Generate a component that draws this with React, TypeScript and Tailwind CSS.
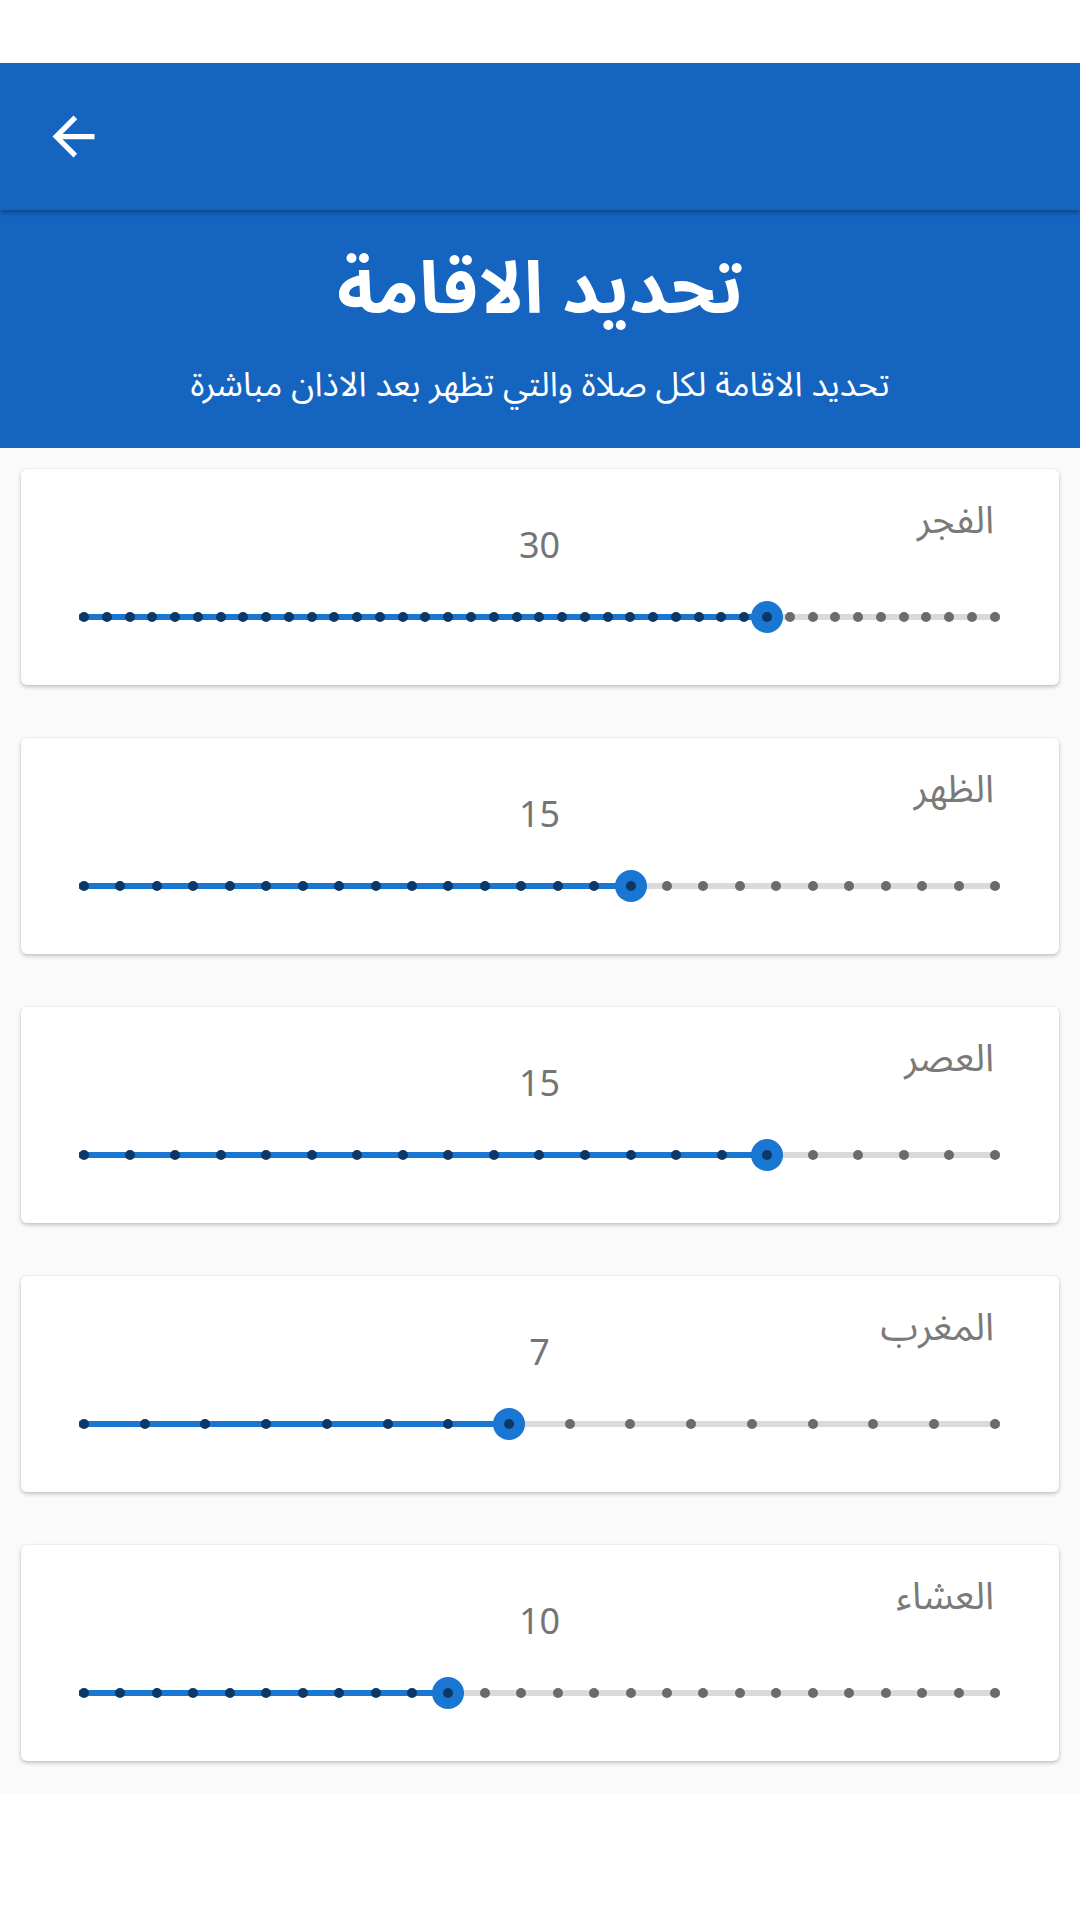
const arabic = { fontFamily: '"Noto Sans Arabic", "Noto Sans", "DejaVu Sans", sans-serif' };

type Prayer = { name: string; value: number; max: number };

const prayers: Prayer[] = [
  { name: "الفجر", value: 30, max: 40 },
  { name: "الظهر", value: 15, max: 25 },
  { name: "العصر", value: 15, max: 20 },
  { name: "المغرب", value: 7, max: 15 },
  { name: "العشاء", value: 10, max: 25 },
];

const BackArrow = () => (
  <svg viewBox="0 0 24 24" width={63} height={63} fill="white">
    <path d="M20 11H7.83l5.59-5.59L12 4l-8 8 8 8 1.41-1.41L7.83 13H20v-2z" />
  </svg>
);

const Slider = ({ value, max }: { value: number; max: number }) => {
  const pct = (value / max) * 100;
  const dots = Array.from({ length: max + 1 }, (_, i) => i);
  return (
    <div className="relative h-[32px] w-full flex items-center" dir="ltr">
      <div className="absolute left-0 right-0 h-[6px] bg-[#dadada]" />
      <div className="absolute left-0 right-0 px-[5px] flex items-center">
        <div className="relative w-full h-[6px]">
          <div className="absolute left-[-5px] top-0 h-[6px] bg-[#1976d2]" style={{ width: `calc(${pct}% + 5px)` }} />
        </div>
      </div>
      <div className="absolute left-0 right-0 flex justify-between items-center">
        {dots.map((i) => (
          <span key={i} className={`block w-[10px] h-[10px] rounded-full ${i <= value ? "bg-[#0d3766]" : "bg-[#6b6b6b]"}`} />
        ))}
      </div>
      <div className="absolute left-[5px] right-[5px] top-0 h-[32px]">
        <div
          className="absolute top-0 w-[32px] h-[32px] -ml-[16px] rounded-full bg-[#1976d2] flex items-center justify-center"
          style={{ left: `${pct}%` }}
        >
          <span className="block w-[10px] h-[10px] rounded-full bg-[#0d3766]" />
        </div>
      </div>
    </div>
  );
};

const PrayerCard = ({ p }: { p: Prayer }) => (
  <div className="h-[216px] bg-white rounded-[6px] shadow-[0_2px_4px_rgba(0,0,0,0.22),0_0_2px_rgba(0,0,0,0.08)] flex flex-col pl-[58px] pr-[59px]">
    <div className="flex justify-end pr-[6px] pt-[25px] h-[51px]">
      <span className="text-[38px] leading-[54px] text-[#7a7a7a]" style={arabic} dir="rtl">
        {p.name}
      </span>
    </div>
    <div className="flex justify-center h-[50px]">
      <span className="text-[36px] leading-[50px] text-[#757575] font-['Noto_Sans']">{p.value}</span>
    </div>
    <div className="mt-[31px]">
      <Slider value={p.value} max={p.max} />
    </div>
  </div>
);

export default function App() {
  return (
    <div className="w-[1080px] h-[1920px] bg-white flex flex-col">
      <div className="h-[63px] bg-white" />
      <div className="relative z-10 h-[147px] bg-[#1565c0] shadow-[0_3px_5px_rgba(0,0,0,0.28)] flex items-center pl-[42px]">
        <BackArrow />
      </div>
      <div className="h-[238px] bg-[#1565c0] flex flex-col items-center text-white" style={arabic} dir="rtl">
        <h1 className="mt-[30px] text-[72px] leading-[100px] font-bold">تحديد الاقامة</h1>
        <p className="mt-[20px] text-[34px] leading-[50px]">تحديد الاقامة لكل صلاة والتي تظهر بعد الاذان مباشرة</p>
      </div>
      <div className="bg-[#fafafa] px-[21px] pt-[21px] pb-[32px] flex flex-col gap-[53px]">
        {prayers.map((p) => (
          <PrayerCard key={p.name} p={p} />
        ))}
      </div>
    </div>
  );
}
